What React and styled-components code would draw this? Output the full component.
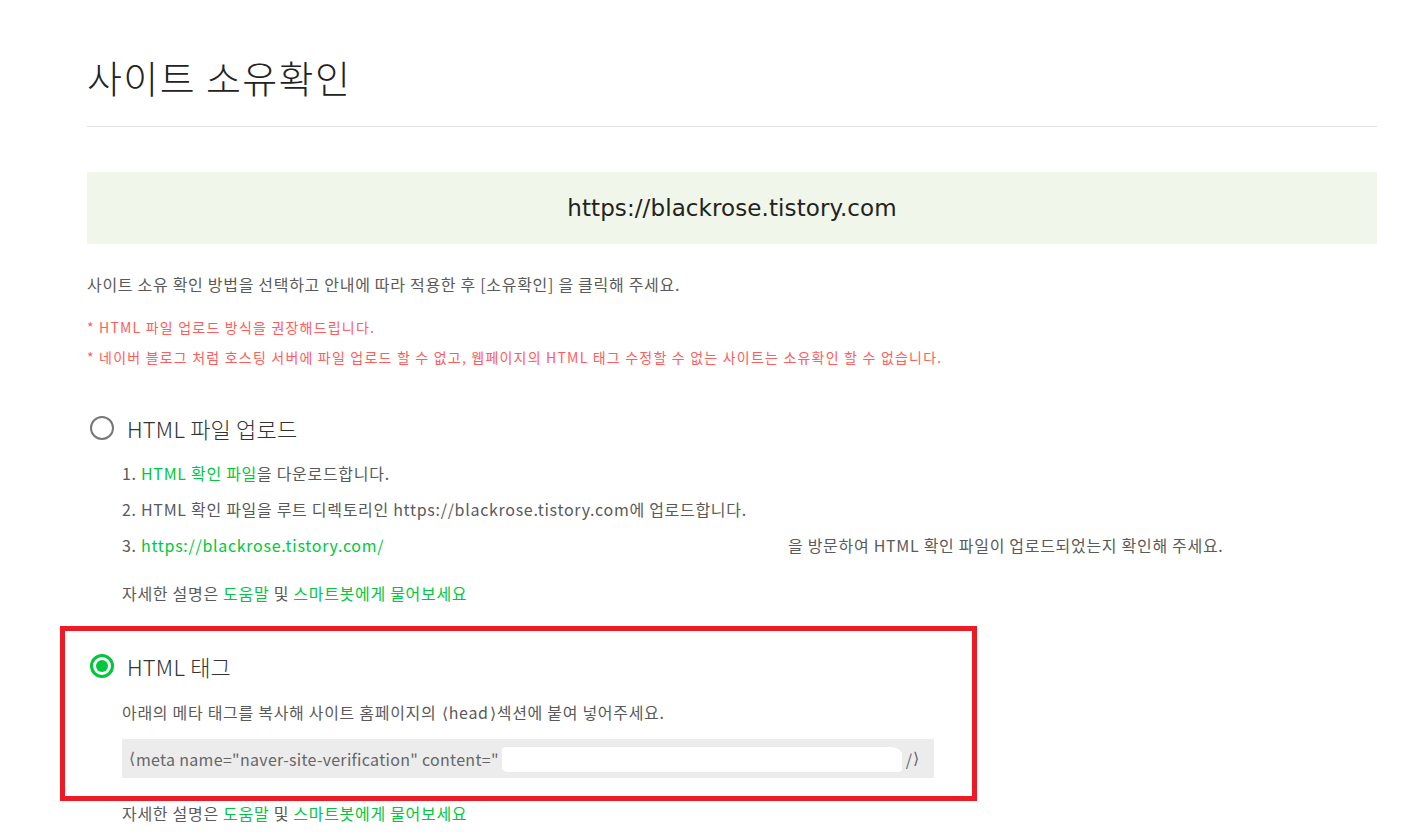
import React from 'react'
import styled, { createGlobalStyle } from 'styled-components'

const GlobalStyle = createGlobalStyle`
    body {
        margin: 0;
        background: #fff;
        font-family: "Noto Sans CJK KR", "Noto Sans", sans-serif;
        color: #555;
    }
`

const green = '#00c73c'

const Page = styled.div`
    padding: 0 40px 40px 87px;
`

const Header = styled.header`
    padding: 55px 0 27px;
    border-bottom: 1px solid #e2e2e2;
`

const Title = styled.h1`
    margin: 0;
    font-size: 38px;
    line-height: 44px;
    font-weight: 300;
    color: #222;
    letter-spacing: 1.4px;
`

const SiteBox = styled.div`
    margin-top: 45px;
    height: 72px;
    line-height: 72px;
    background: #f0f6e9;
    text-align: center;
    font-family: "DejaVu Sans", "Noto Sans", sans-serif;
    font-size: 23px;
    letter-spacing: 0.1px;
    color: #222;
`

const Lead = styled.p`
    margin: 28px 0 0;
    font-size: 16px;
    line-height: 24px;
    color: #5a5a5a;
    letter-spacing: 0.7px;
`

const Notes = styled.ul`
    margin: 16px 0 0;
    padding: 0;
    list-style: none;
`

const Note = styled.li`
    font-size: 14px;
    line-height: 30px;
    color: #ff5c5c;
    letter-spacing: 1.2px;
`

const Option = styled.label`
    display: flex;
    align-items: center;
    gap: 13px;
    height: 30px;
    margin: ${p => p.$top || 0}px 0 0 3px;
    font-size: 22px;
    font-weight: 300;
    color: #333;
    letter-spacing: 0.2px;
`

const Radio = styled.span`
    box-sizing: border-box;
    width: 24px;
    height: 24px;
    border-radius: 50%;
    border: ${p => (p.$checked ? `3px solid ${green}` : '2.5px solid #777')};
    display: flex;
    align-items: center;
    justify-content: center;
    &::after {
        content: '';
        display: ${p => (p.$checked ? 'block' : 'none')};
        width: 12px;
        height: 12px;
        border-radius: 50%;
        background: ${green};
    }
`

const Steps = styled.ol`
    margin: 12px 0 0 35px;
    padding: 0;
    list-style: none;
`

const Step = styled.li`
    display: ${p => (p.$split ? 'grid' : 'block')};
    grid-template-columns: 666px auto;
    font-size: 16px;
    line-height: 36px;
    color: #5a5a5a;
    letter-spacing: 0.7px;
    white-space: nowrap;
`

const Link = styled.a`
    color: ${green};
    text-decoration: none;
`

const Help = styled.p`
    margin: ${p => p.$top || 0}px 0 0 35px;
    font-size: 16px;
    line-height: 24px;
    color: #5a5a5a;
    letter-spacing: 0.7px;
`

const Highlight = styled.section`
    margin: 21px 0 0 -27px;
    width: 917px;
    box-sizing: border-box;
    border: 5px solid #ed1c24;
    padding: 20px 0 18px 22px;
`

const TagDesc = styled.p`
    margin: 19px 0 0 35px;
    font-size: 16px;
    line-height: 24px;
    color: #5a5a5a;
    letter-spacing: 0.7px;
`

const Bracket = styled.span`
    font-family: "DejaVu Sans", sans-serif;
    font-weight: 300;
    letter-spacing: 0;
    margin: 0 1px;
`

const Code = styled.div`
    margin: 13px 0 0 35px;
    width: 812px;
    height: 39px;
    box-sizing: border-box;
    padding-left: 6px;
    display: flex;
    align-items: center;
    background: #ececec;
    font-size: 16px;
    color: #666;
    letter-spacing: 0.3px;
    white-space: nowrap;
`

const Redacted = styled.span`
    display: inline-block;
    width: 400px;
    height: 25px;
    margin: 2px 4px 0 3px;
    background: #fff;
    border-radius: 3px 12px 4px 6px / 3px 8px 3px 4px;
`

export default function App() {
    return (
        <Page>
            <GlobalStyle />
            <Header>
                <Title>사이트 소유확인</Title>
            </Header>
            <SiteBox>https://blackrose.tistory.com</SiteBox>
            <Lead>사이트 소유 확인 방법을 선택하고 안내에 따라 적용한 후 [소유확인] 을 클릭해 주세요.</Lead>
            <Notes>
                <Note>* HTML 파일 업로드 방식을 권장해드립니다.</Note>
                <Note>* 네이버 블로그 처럼 호스팅 서버에 파일 업로드 할 수 없고, 웹페이지의 HTML 태그 수정할 수 없는 사이트는 소유확인 할 수 없습니다.</Note>
            </Notes>

            <Option $top={41}>
                <Radio />
                HTML 파일 업로드
            </Option>
            <Steps>
                <Step>1. <Link>HTML 확인 파일</Link>을 다운로드합니다.</Step>
                <Step>2. HTML 확인 파일을 루트 디렉토리인 https://blackrose.tistory.com에 업로드합니다.</Step>
                <Step $split>
                    <span>3. <Link>https://blackrose.tistory.com/</Link></span>
                    <span>을 방문하여 HTML 확인 파일이 업로드되었는지 확인해 주세요.</span>
                </Step>
            </Steps>
            <Help $top={18}>자세한 설명은 <Link>도움말</Link> 및 <Link>스마트봇에게 물어보세요</Link></Help>

            <Highlight>
                <Option>
                    <Radio $checked />
                    HTML 태그
                </Option>
                <TagDesc>
                    아래의 메타 태그를 복사해 사이트 홈페이지의 <Bracket>⟨</Bracket>head<Bracket>⟩</Bracket>섹션에 붙여 넣어주세요.
                </TagDesc>
                <Code>
                    <Bracket>⟨</Bracket>meta name="naver-site-verification" content="<Redacted />/<Bracket>⟩</Bracket>
                </Code>
            </Highlight>
            <Help>자세한 설명은 <Link>도움말</Link> 및 <Link>스마트봇에게 물어보세요</Link></Help>
        </Page>
    )
}
